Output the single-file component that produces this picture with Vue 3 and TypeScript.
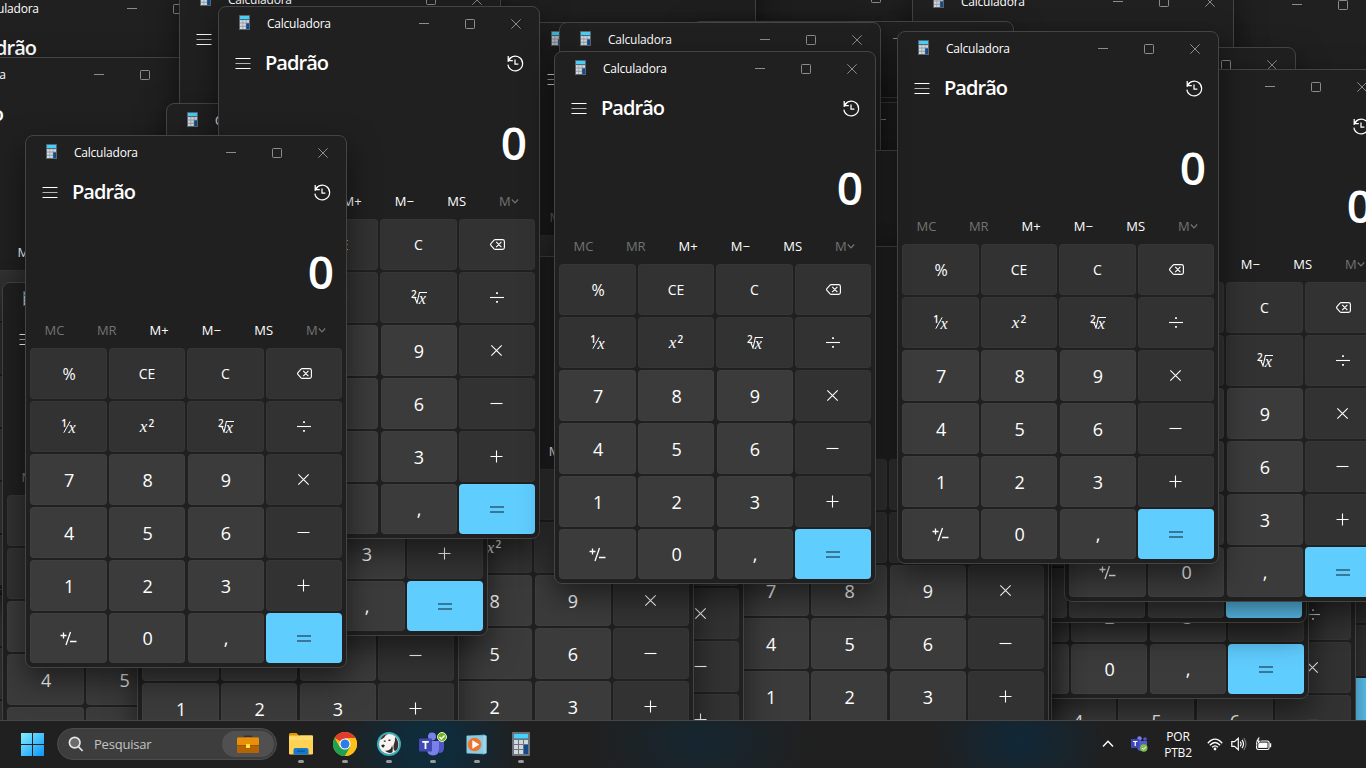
<script setup lang="ts">
interface Win { x: number; y: number }
interface Key { k: string; t: 'op' | 'num' | 'eq' }

// Back to front.
const windows: Win[] = [
  { x: -225, y: 276 },
  { x: -74, y: -9 },
  { x: -107, y: 57 },
  { x: 624, y: -20 },
  { x: 434, y: -90 },
  { x: 179, y: -18 },
  { x: 1091, y: -13 },
  { x: 912, y: -16 },
  { x: 692, y: 21 },
  { x: 650, y: 97 },
  { x: 675, y: 102 },
  { x: 974, y: 47 },
  { x: 1100, y: 200 },
  { x: 1034, y: 323 },
  { x: 987, y: 166 },
  { x: 985, y: 90 },
  { x: 1064, y: 69 },
  { x: 530, y: 22 },
  { x: 559, y: 22 },
  { x: 660, y: 150 },
  { x: 730, y: 250 },
  { x: 727, y: 246 },
  { x: 422, y: 269 },
  { x: 372, y: 256 },
  { x: 2, y: 282 },
  { x: 137, y: 258 },
  { x: 166, y: 103 },
  { x: 218, y: 6 },
  { x: 897, y: 31 },
  { x: 554, y: 51 },
  { x: 25, y: 135 },
]

const op = (k: string): Key => ({ k, t: 'op' })
const num = (k: string): Key => ({ k, t: 'num' })
const keys: Key[] = [
  op('%'), op('CE'), op('C'), op('back'),
  op('inv'), op('sq'), op('root'), op('div'),
  num('7'), num('8'), num('9'), op('mul'),
  num('4'), num('5'), num('6'), op('sub'),
  num('1'), num('2'), num('3'), op('add'),
  num('neg'), num('0'), num(','), { k: 'eq', t: 'eq' },
]
const icons: Record<string, string> = {
  div: 'M1 7.5H15',
  mul: 'M2.3 2.3l10.4 10.4M12.7 2.3L2.3 12.7',
  sub: 'M1.5 7.5H13.5',
  add: 'M1.5 7.5H13.5M7.5 1.5V13.5',
  eq: 'M1 5H15M1 10H15',
}
const textKeys = /^[0-9,%CE]+$/
</script>

<template>
  <div class="desktop">
    <section v-for="(w, i) in windows" :key="i" class="win" :style="{ left: w.x + 'px', top: w.y + 'px' }">
      <header class="title">
        <svg class="app-icon" viewBox="0 0 11 15" width="11" height="15">
          <rect width="11" height="15" rx=".6" fill="#5d666e" />
          <rect x="1" y="1" width="9" height="3" fill="#3fd0fb" />
          <path d="M1 5h9v9H1z" fill="#929ba3" />
          <path d="M1 5.3h2.5v2.3H1zM4.2 5.3h2.5v2.3H4.2zM7.5 5.3H10v2.3H7.5zM1 8.5h2.5v2.3H1zM4.2 8.5h2.5v2.3H4.2zM1 11.7h2.5V14H1zM4.2 11.7h2.5V14H4.2z" fill="#d3dae1" />
          <rect x="7.2" y="8.4" width="2.8" height="5.6" fill="#124a8c" />
        </svg>
        <span class="name">Calculadora</span>
        <svg class="caption" viewBox="0 0 102 10" width="102" height="10" fill="none" stroke="#8c8c8c">
          <path d="M0 4.5H10" />
          <rect x="46.5" y=".5" width="9" height="9" rx=".8" />
          <path d="M92.3 .3l9.4 9.4M101.7 .3L92.3 9.7" />
        </svg>
      </header>
      <div class="mode">
        <svg class="menu" viewBox="0 0 16 12" width="16" height="12" stroke="#fff" fill="none">
          <path d="M.5 1.5H15.5M.5 11.5H15.5" /><path d="M.5 6.5H15.5" stroke="#b5b5b5" />
        </svg>
        <h1>Padrão</h1>
        <svg class="history" viewBox="0 0 17 17" width="17" height="17" fill="none" stroke="#fff" stroke-width="1.25">
          <path d="M1 6.9A7.4 7.4 0 1 1 .9 9.6M1.2 1v4.6h4.6M1.5 5.4L3.9 3M8 4.6V9.2h3.4" />
        </svg>
      </div>
      <div class="display">0</div>
      <div class="memory">
        <span class="off">MC</span><span class="off">MR</span><span>M+</span><span>M−</span><span>MS</span>
        <span class="off">M<svg viewBox="0 0 8 6" width="8" height="6" fill="none" stroke="currentColor" stroke-width="1.2"><path d="M.8 1.5l3.2 3.4L7.2 1.5" /></svg></span>
      </div>
      <div class="keys">
        <div v-for="(b, j) in keys" :key="j" class="key" :class="[b.t, { third: b.t === 'num' && j % 4 === 2, letters: b.k === 'C' || b.k === 'CE', pct: b.k === '%' }]">
          <template v-if="textKeys.test(b.k)">{{ b.k }}</template>
          <svg v-else-if="b.k === 'back'" class="back" viewBox="0 0 15 11" width="15" height="11" fill="none" stroke="#fff" stroke-width="1.15">
            <path d="M5.2 .6h7.3q1.9 0 1.9 1.9v6q0 1.9-1.9 1.9H5.2q-.7 0-1.2-.5L.9 6.3q-.7-.8 0-1.6L4 1.1q.5-.5 1.2-.5zM6.2 2.9l5.2 5.2M11.4 2.9L6.2 8.1" />
          </svg>
          <span v-else-if="b.k === 'inv'" class="math inv"><sup>1</sup>
            <svg viewBox="0 0 8 12" width="8" height="12" fill="none" stroke="#fff"><path d="M7.2 .3L.8 11.7" /></svg><i>x</i></span>
          <span v-else-if="b.k === 'sq'" class="math sq"><i>x</i><sup>2</sup></span>
          <span v-else-if="b.k === 'root'" class="math root"><sup>2</sup>
            <svg viewBox="0 0 14 13" width="14" height="13" fill="none" stroke="#fff"><path d="M.3 7l1.5-.7L4 12 6.4 1.5H14" stroke-width="1.1" /></svg><i>x</i></span>
          <svg v-else-if="b.k === 'neg'" class="neg" viewBox="0 0 17 15" width="17" height="15" fill="none" stroke="#fff" stroke-width="1.3">
            <path d="M.5 4.5h6M3.5 1.5v6M10.5 1L6 14M10 10.5h6.5" />
          </svg>
          <svg v-else viewBox="0 0 15 15" width="15" height="15" fill="none" :stroke="b.k === 'eq' ? '#123' : '#fff'" stroke-width="1.1">
            <path :d="icons[b.k]" />
            <path v-if="b.k === 'div'" d="M7.1 3.1h1.8M7.1 11.9h1.8" stroke-width="1.8" />
          </svg>
        </div>
      </div>
    </section>

    <footer class="taskbar">
      <svg class="start" viewBox="0 0 23 23" width="23" height="23">
        <defs><linearGradient id="wg" x1="0" y1="0" x2="23" y2="23" gradientUnits="userSpaceOnUse"><stop offset="0" stop-color="#86efff" /><stop offset="1" stop-color="#0995fb" /></linearGradient></defs>
        <path d="M0 0h11v11H0zM12 0h11v11H12zM0 12h11v11H0zM12 12h11v11H12z" fill="url(#wg)" />
      </svg>
      <div class="search">
        <svg viewBox="0 0 16 16" width="16" height="16" fill="#6b6b6b" stroke="#e4e4e4" stroke-width="1.7"><circle cx="6.7" cy="6.6" r="5.3" /><path d="M10.6 10.8l4 4.2" /></svg>
        <span>Pesquisar</span>
        <div class="bag">
          <svg viewBox="0 0 22 18" width="22" height="18">
            <path d="M7.5 3V1.2h7V3" fill="none" stroke="#30343a" stroke-width="1.5" />
            <rect y="2.5" width="22" height="15.5" rx="1" fill="#b56405" /><rect y="2.5" width="22" height="8" rx="1" fill="#e98f08" />
            <rect y="10" width="22" height="1" fill="#a05605" /><rect x="9" y="9" width="4" height="4" fill="#ffdc27" /><rect x="10.2" y="10.5" width="1.6" height="1.5" fill="#fff3a0" />
          </svg>
        </div>
      </div>
      <nav class="apps">
        <div class="app">
          <svg viewBox="0 0 24 24" width="24" height="24">
            <path d="M0 2.5Q0 1 1.5 1h6L10 3.5V7H0z" fill="#dc9800" /><rect y="3.4" width="24" height="19" rx="1.2" fill="#ffd254" />
            <path d="M0 5.5V4.5L9 5.2 11 3.4H23q1 0 1 1V8H0z" fill="#ffdb6b" />
            <path d="M4.5 22.4V18q0-2 2-2h11q2 0 2 2v4.4z" fill="#1479cc" /><path d="M8 18.5h8v1.3H8z" fill="#0c559d" />
          </svg>
        </div>
        <div class="app">
          <svg viewBox="0 0 24 24" width="24" height="24">
            <circle cx="12" cy="12" r="12" fill="#fbc116" /><path d="M12 12L1.6 6A12 12 0 0 1 22.4 6z" fill="#e33b2e" />
            <path d="M1.6 6A12 12 0 0 0 12 24l5.2-9L6.8 15z" fill="#1fa152" /><path d="M12 24a12 12 0 0 0 10.4-18H12v6l5.2 3z" fill="#fbc116" />
            <circle cx="12" cy="12" r="5.6" fill="#fff" /><circle cx="12" cy="12" r="4.5" fill="#2c7ce9" />
          </svg>
        </div>
        <div class="app">
          <svg viewBox="0 0 24 24" width="24" height="24">
            <circle cx="12" cy="12" r="12" fill="#3eabb7" /><circle cx="12" cy="12" r="10" fill="#f6f3f0" />
            <path d="M4.5 5.5Q7 2.2 11 2.2 8 3.3 7.2 5.5 5 7 3.2 8z" fill="#3a302d" />
            <path d="M18 5q1.8 1.3 2.6 3.5 1.600 4 .2 7.500-1.300 3-3 3.300Q16 17 16.500 13.500 18.500 9 18 5z" fill="#3a302d" />
            <path d="M4.3 13.3q2-1.6 3.6.2l-1.3 2q-2 .2-2.300-2.200zM7.500 18.500q3.500.8 6-1.500 1.500-2 1.500-4 1.500 3 .5 7.200-3.500 2.200-8-1.700zM6.800 8.500h1.800v1.300H6.800zM11.500 7.600h1.900v1.400h-1.900z" fill="#2c2523" />
          </svg>
        </div>
        <div class="app">
          <svg viewBox="0 0 28 24" width="28" height="24">
            <circle cx="13" cy="4.5" r="4" fill="#7a80ea" /><circle cx="22" cy="6" r="3" fill="#555bc9" />
            <path d="M19 9h6v7q0 5-5 5z" fill="#5057c4" /><path d="M8 9h12v8q0 6.5-6 6.5T8 17z" fill="#7a80ea" />
            <rect y="6.5" width="13" height="13" rx="1" fill="#4349b3" /><path d="M3.2 9.900h6.600M6.500 9.900v7" stroke="#fff" stroke-width="1.8" />
            <circle cx="23" cy="5" r="4.500" fill="#72b51b" stroke="#e5efd9" stroke-width="1" /><path d="M20.5 5l1.8 1.900L25.600 3.400" fill="none" stroke="#fff" stroke-width="1.4" />
          </svg>
        </div>
        <div class="app">
          <svg viewBox="0 0 24 24" width="24" height="24">
            <path d="M4 4l15-1.5 2.500 1v18l-3 1L4 21z" fill="#4d9dc0" /><path d="M18 3l3.500 1v17L18 22z" fill="#9dd5e8" />
            <rect x="1.500" y="3.500" width="16.500" height="18" rx="1" fill="#8ccbe2" /><circle cx="9.500" cy="12.500" r="6.800" fill="#ed762e" /><path d="M7.300 8.300v8.400l7-4.200z" fill="#fff" />
          </svg>
        </div>
        <div class="app">
          <svg viewBox="0 0 18 24" width="18" height="24">
            <rect width="18" height="24" rx="1" fill="#6b737b" /><rect x="2" y="2" width="14" height="4.3" fill="#43d2fc" />
            <path d="M2 8h4v4H2zM7 8h4v4H7zM12 8h4v4h-4zM2 13h4v4H2zM7 13h4v4H7zM2 18h4v4H2zM7 18h4v4H7z" fill="#d0d7de" /><rect x="12" y="13" width="4" height="9" fill="#134a8d" />
          </svg>
        </div>
      </nav>
      <div class="tray">
        <svg class="chev" viewBox="0 0 12 8" width="12" height="8" fill="none" stroke="#fff" stroke-width="1.4"><path d="M1 6.5L6 1.300l5 5.200" /></svg>
        <svg class="mini" viewBox="0 0 17 16" width="17" height="16">
          <circle cx="8.500" cy="2.500" r="2.200" fill="#7a80ea" /><circle cx="14" cy="3" r="1.800" fill="#555bc9" /><path d="M6 5h10v5q0 5-6 5-4 0-4-5z" fill="#555bc9" />
          <rect y="3" width="8.500" height="9" fill="#3e47b8" /><path d="M2 5.500h4.500M4.250 5.500v4.500" stroke="#fff" stroke-width="1.2" />
          <circle cx="12.800" cy="12" r="3.700" fill="#82bd4b" /><path d="M11 12l1.400 1.400L15 10.600" fill="none" stroke="#fff" />
        </svg>
        <div class="lang"><span>POR</span><span>PTB2</span></div>
        <svg class="wifi" viewBox="0 0 16 13" width="16" height="13" fill="none" stroke="#fff" stroke-width="1.3">
          <path d="M.8 5.200Q8-2.800 15.200 5.200M2.900 7.300Q8 1.700 13.100 7.300M5.100 9.300Q8 6.300 10.900 9.300" /><circle cx="8" cy="11" r="1.400" fill="#fff" stroke="none" />
        </svg>
        <svg class="vol" viewBox="0 0 16 14" width="16" height="14" fill="none" stroke="#fff" stroke-width="1.2">
          <path d="M.8 4.700h2.700L7.300 1.300v11.400L3.500 9.300H.8zM9.300 4.700q1.500 2.300 0 4.600M11 2.800q3 4.200 0 8.400" /><path d="M12.800 1.200q4.300 5.800 0 11.600" stroke="#777" />
        </svg>
        <svg class="batt" viewBox="0 0 17 14" width="17" height="14">
          <rect x="1.600" y="4" width="12.500" height="8.500" rx="1.800" fill="none" stroke="#fff" stroke-width="1.2" /><rect x="3.200" y="5.600" width="9.300" height="5.300" fill="#fff" /><path d="M15 6.300h1.200v4H15z" fill="#fff" />
          <path d="M3.500 0L.6 4.800h2L2 8.500l4-5H3.800L5 0z" fill="#fff" stroke="#202020" stroke-width=".6" />
        </svg>
      </div>
    </footer>
  </div>
</template>

<style>
html, body { margin: 0; background: #202020; overflow: hidden; }
</style>

<style scoped>
.desktop { position: relative; width: 1366px; height: 768px; overflow: hidden; background: #1c1c1c; color: #fff; font-family: "Open Sans", "Noto Sans", sans-serif; }
svg { display: block; flex: none; }
.win { position: absolute; box-sizing: border-box; width: 322px; height: 533px; border: 1px solid #444; border-radius: 8px; background: #202020; box-shadow: 0 12px 30px rgba(0, 0, 0, .5); display: flex; flex-direction: column; overflow: hidden; }
.title { height: 33px; display: flex; align-items: center; padding: 0 18px 0 20px; flex: none; box-sizing: border-box; }
.app-icon { margin-bottom: 2px; }
.name { margin-left: 17px; font-size: 12px; line-height: 16px; letter-spacing: -.22px; padding-top: 1px; }
.caption { margin-left: auto; }
.mode { height: 46px; display: flex; align-items: center; padding: 0 15px 0 16px; box-sizing: border-box; flex: none; }
h1 { margin: 0 0 0 14px; font-size: 20px; line-height: 26px; font-weight: 600; letter-spacing: -.95px; }
.history { margin-left: auto; }
.display { height: 100px; box-sizing: border-box; padding: 6px 12px 0 0; line-height: 100px; text-align: right; font-size: 46px; font-weight: 600; flex: none; }
.memory { height: 33px; box-sizing: border-box; display: grid; grid-template-columns: repeat(6, 52.3px); padding: 0 0 3px 2.3px; align-items: center; justify-items: center; font-size: 13px; line-height: 18px; flex: none; }
.memory span { display: flex; align-items: center; }
.off { color: #737373; }
.keys { display: grid; grid-template-columns: 77px 76px 77px 76px; grid-template-rows: repeat(5, 51px) 50px; gap: 2px; padding: 0 4px; }
.key { display: flex; align-items: center; justify-content: center; border-radius: 4px; box-sizing: border-box; font-size: 18px; line-height: 24px; border: 1px solid rgba(255, 255, 255, .025); }
.op { background: #323232; }
.num { background: #3b3b3b; padding-left: 1.5px; }
.eq { background: #60cdff; }
.op > svg, .eq > svg { margin-right: 1px; overflow: visible; }
.op > .back { margin-right: 0; }
.neg { margin-right: 2px; }
.third { margin-left: 1px; padding-left: 0; }
.letters { font-size: 14px; }
.pct { font-size: 16px; padding-left: 1px; }
.math { display: flex; align-items: center; height: 20px; }
.math i { font: italic 17px/20px "Liberation Serif", serif; }
.math sup { font-size: 10px; line-height: 10px; align-self: flex-start; margin-top: 1px; font-weight: 600; vertical-align: baseline; }
.inv svg { margin: 0 -2.5px 0 -4px; }
.inv i { font-size: 16px; padding-top: 2px; }
.sq sup { margin-left: 1px; }
.root svg { margin: 0 -8px 0 -4px; }
.root i { font-size: 16px; padding-top: 2px; }
.taskbar { position: absolute; left: 0; right: 0; bottom: 0; height: 48px; box-sizing: border-box; border-top: 1px solid #464646; display: flex; align-items: center; padding: 0 0 1px 21px; background: radial-gradient(ellipse 90px 80px at 430px 24px, #102b3a 30%, transparent), radial-gradient(ellipse 110px 70px at 700px 20px, #152630, transparent), radial-gradient(ellipse 90px 70px at 1020px 20px, #102838, transparent), #202020; }
.search { margin-left: 13px; width: 220px; height: 32px; box-sizing: border-box; border: 1px solid #4c4c4c; border-radius: 16px; background: #3d3d3d; display: flex; align-items: center; padding: 0 2px 0 10px; font-size: 13px; color: #c4c4c4; }
.search span { margin-left: 10px; letter-spacing: -.2px; }
.bag { margin-left: auto; width: 52px; height: 26px; border-radius: 13px; background: #505050; display: flex; align-items: center; justify-content: center; }
.apps { display: flex; margin-left: 2px; height: 46px; }
.app { width: 44px; display: flex; flex-direction: column; align-items: center; padding-top: 11px; box-sizing: border-box; }
.app::after { content: ""; width: 6px; height: 3px; border-radius: 2px; background: #999; margin-top: 4px; }
.tray { margin-left: auto; display: flex; align-items: center; padding-right: 94px; }
.mini { margin-left: 17px; }
.lang { margin-left: 16px; width: 28px; display: flex; flex-direction: column; align-items: center; font-size: 12px; line-height: 16px; letter-spacing: -.2px; padding-top: 1px; }
.wifi { margin-left: 15px; }
.vol { margin-left: 8px; }
.batt { margin-left: 8px; }
</style>
